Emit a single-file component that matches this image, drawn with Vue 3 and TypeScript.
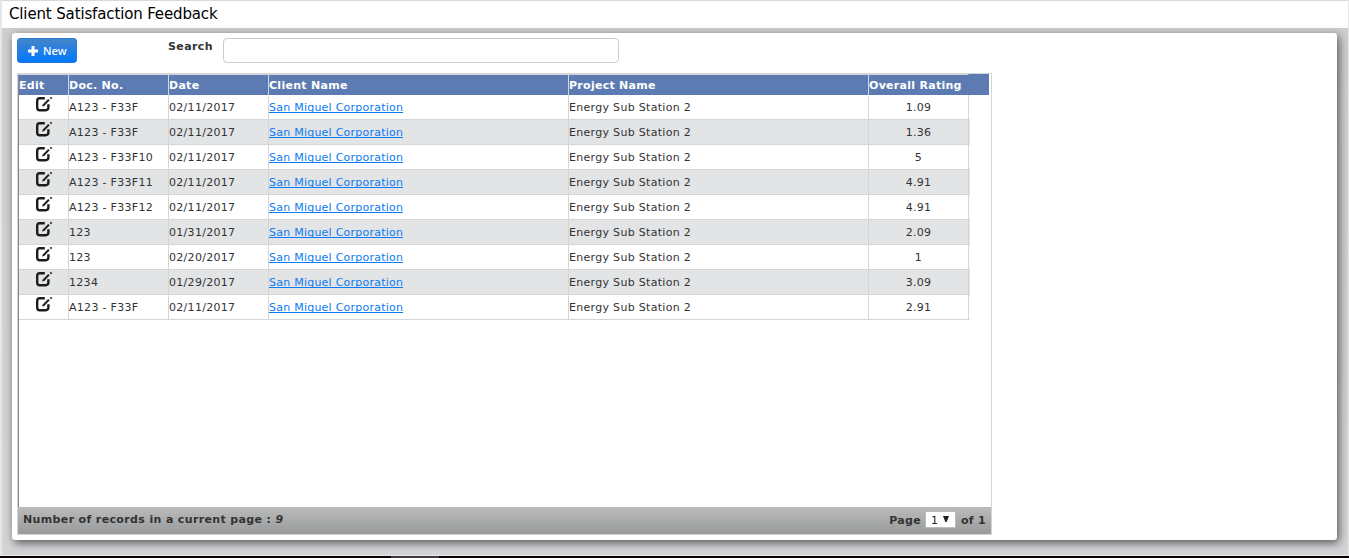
<script setup lang="ts">
interface Feedback {
  doc: string
  date: string
  rating: string
}

const client = 'San Miguel Corporation'
const project = 'Energy Sub Station 2'

const records: Feedback[] = [
  { doc: 'A123 - F33F', date: '02/11/2017', rating: '1.09' },
  { doc: 'A123 - F33F', date: '02/11/2017', rating: '1.36' },
  { doc: 'A123 - F33F10', date: '02/11/2017', rating: '5' },
  { doc: 'A123 - F33F11', date: '02/11/2017', rating: '4.91' },
  { doc: 'A123 - F33F12', date: '02/11/2017', rating: '4.91' },
  { doc: '123', date: '01/31/2017', rating: '2.09' },
  { doc: '123', date: '02/20/2017', rating: '1' },
  { doc: '1234', date: '01/29/2017', rating: '3.09' },
  { doc: 'A123 - F33F', date: '02/11/2017', rating: '2.91' },
]
</script>

<template>
  <div class="page">
    <header class="title"><span>Client Satisfaction Feedback</span></header>
    <main class="content">
      <section class="card">
        <div class="toolbar">
          <button class="new" type="button">
            <svg width="10" height="10" viewBox="0 0 10 10"><path d="M3.5 0h3v3.5H10v3H6.5V10h-3V6.5H0v-3h3.5z" fill="#fff" /></svg>
            <span>New</span>
          </button>
          <label class="search-label" for="search">Search</label>
          <input id="search" class="search" type="text" />
        </div>
        <div class="grid">
          <div class="row head">
            <div class="cell first">Edit</div>
            <div class="cell">Doc. No.</div>
            <div class="cell">Date</div>
            <div class="cell">Client Name</div>
            <div class="cell">Project Name</div>
            <div class="cell rating-head">Overall Rating</div>
            <div class="gutter"></div>
          </div>
          <div class="body">
            <div v-for="(r, i) in records" :key="i" class="row data" :class="{ alt: i % 2 === 1 }">
              <div class="cell edit">
                <svg width="18" height="17" viewBox="0 0 18 17" fill="none">
                  <path d="M9.8 2.2H4.6Q2.2 2.2 2.2 4.8V11.4Q2.2 14.2 4.8 14.2H10.6Q13.4 14.2 13.4 11.4V8.2" stroke="#1c1c1c" stroke-width="2.4" />
                  <path d="M7 10.6L7.8 8.4L13.2 2.9L14.7 4.3L9.2 9.9Z" fill="#1c1c1c" />
                  <path d="M14.8 1.9L16 .8L17.2 2L16 3.2Z" fill="#1c1c1c" />
                </svg>
              </div>
              <div class="cell">{{ r.doc }}</div>
              <div class="cell date">{{ r.date }}</div>
              <div class="cell"><a class="link">{{ client }}</a></div>
              <div class="cell project">{{ project }}</div>
              <div class="cell rating">{{ r.rating }}</div>
            </div>
          </div>
          <footer class="footer">
            <span class="count">Number of records in a current page : <i>9</i></span>
            <span class="pager">
              <span class="page-word">Page</span>
              <span class="select">
                <span>1</span>
                <svg width="6" height="6" viewBox="0 0 6 6"><path d="M0 0h6L3.6 6H2.4z" fill="#222" /></svg>
              </span>
              <span class="of">of 1</span>
            </span>
          </footer>
        </div>
      </section>
    </main>
    <div class="taskbar"><span></span></div>
  </div>
</template>

<style>
body {
  margin: 0;
  overflow: hidden;
}
</style>

<style scoped>
.page {
  box-sizing: border-box;
  width: 1349px;
  height: 558px;
  display: flex;
  flex-direction: column;
  font-family: "DejaVu Sans", Verdana, sans-serif;
  font-size: 11px;
  color: #333;
  background: #e6e6e6;
  overflow: hidden;
}
.title {
  box-sizing: border-box;
  height: 28px;
  margin: 0 1px 0 2px;
  padding-left: 7px;
  border-top: 1px solid #d9d9d9;
  background: #fff;
  color: #000;
  font-size: 15px;
  line-height: 26px;
  letter-spacing: -.14px;
  white-space: nowrap;
}
.content {
  box-sizing: border-box;
  height: 527px;
  margin: 0 1px 0 2px;
  padding: 5px 9px 0 10px;
  background: linear-gradient(#cfcfcf, #d4d5d7);
}
.card {
  box-sizing: border-box;
  width: 1325px;
  height: 507px;
  padding: 5px;
  border-radius: 3px;
  background: #fff;
  box-shadow: 2px 3px 10px #555;
}
.toolbar {
  display: flex;
  align-items: flex-start;
  height: 35px;
}
.new {
  box-sizing: border-box;
  width: 60px;
  height: 25px;
  padding: 0 0 0 10px;
  display: flex;
  align-items: center;
  gap: 5px;
  border: 1px solid #2a7bd4;
  border-radius: 3px;
  background: linear-gradient(#4485c8, #0078ff);
  color: #fff;
  font: 500 11px "Noto Sans", sans-serif;
}
.search-label {
  width: 55px;
  margin-left: 91px;
  font-weight: bold;
  line-height: 18px;
  letter-spacing: .4px;
}
.search {
  box-sizing: border-box;
  width: 396px;
  height: 25px;
  border: 1px solid #ccc;
  border-radius: 4px;
  outline: none;
  background: #fff;
}
.grid {
  box-sizing: border-box;
  width: 975px;
  height: 462px;
  border: 1px solid #d3d5d6;
  display: flex;
  flex-direction: column;
}
.row {
  display: grid;
  grid-template-columns: 50px 100px 100px 300px 300px 100px;
  grid-template-rows: 24px;
}
.cell {
  box-sizing: border-box;
  border-right: 1px solid #d3d5d6;
  white-space: nowrap;
}
.row.head {
  grid-template-columns: 51px 100px 100px 300px 300px 100px 20px;
  grid-template-rows: 21px;
  height: 21px;
  width: 971px;
  color: #fff;
  font-weight: bold;
  letter-spacing: .28px;
}
.head .cell {
  background: #5c7bb3;
  border-top: 1px solid #d3d5d6;
  line-height: 22px;
}
.head .first {
  border-left: 1px solid #888;
}
.head .rating-head {
  border-right-color: #5c7bb3;
}
.gutter {
  background: #5c7bb3;
}
.body {
  height: 412px;
  border-left: 1px solid #888;
}
.data {
  box-sizing: border-box;
  width: 951px;
  height: 25px;
  border-bottom: 1px solid #d3d5d6;
  line-height: 26px;
  letter-spacing: .3px;
}
.alt {
  background: #e2e4e6;
}
.edit {
  padding: 1px 0 0 16px;
  line-height: 0;
}
.link {
  display: block;
  width: max-content;
  height: 17px;
  overflow: hidden;
  color: #0b7bf3;
  border-bottom: 1px solid #0b7bf3;
  letter-spacing: .24px;
}
.rating {
  text-align: center;
}
.footer {
  box-sizing: border-box;
  height: 27px;
  display: flex;
  justify-content: space-between;
  padding: 0 5px;
  background: linear-gradient(#bbb, #989a9b);
  font-weight: bold;
  line-height: 26px;
  letter-spacing: .36px;
  white-space: nowrap;
}
.pager {
  display: flex;
  line-height: 27px;
  letter-spacing: .3px;
}
.select {
  box-sizing: border-box;
  display: flex;
  align-items: center;
  width: 31px;
  height: 17px;
  margin: 4px 5px 0 4px;
  padding: 0 6px 2px 5px;
  justify-content: space-between;
  border: 1px solid #bbb;
  background: #fff;
  color: #222;
  font-weight: normal;
  line-height: 15px;
}
.select span {
  padding-top: 3px;
}
.taskbar {
  height: 2px;
  margin-top: 1px;
  background: #080004;
}
.taskbar span {
  display: block;
  width: 48px;
  height: 2px;
  margin-left: 391px;
  background: #443840;
}
</style>
